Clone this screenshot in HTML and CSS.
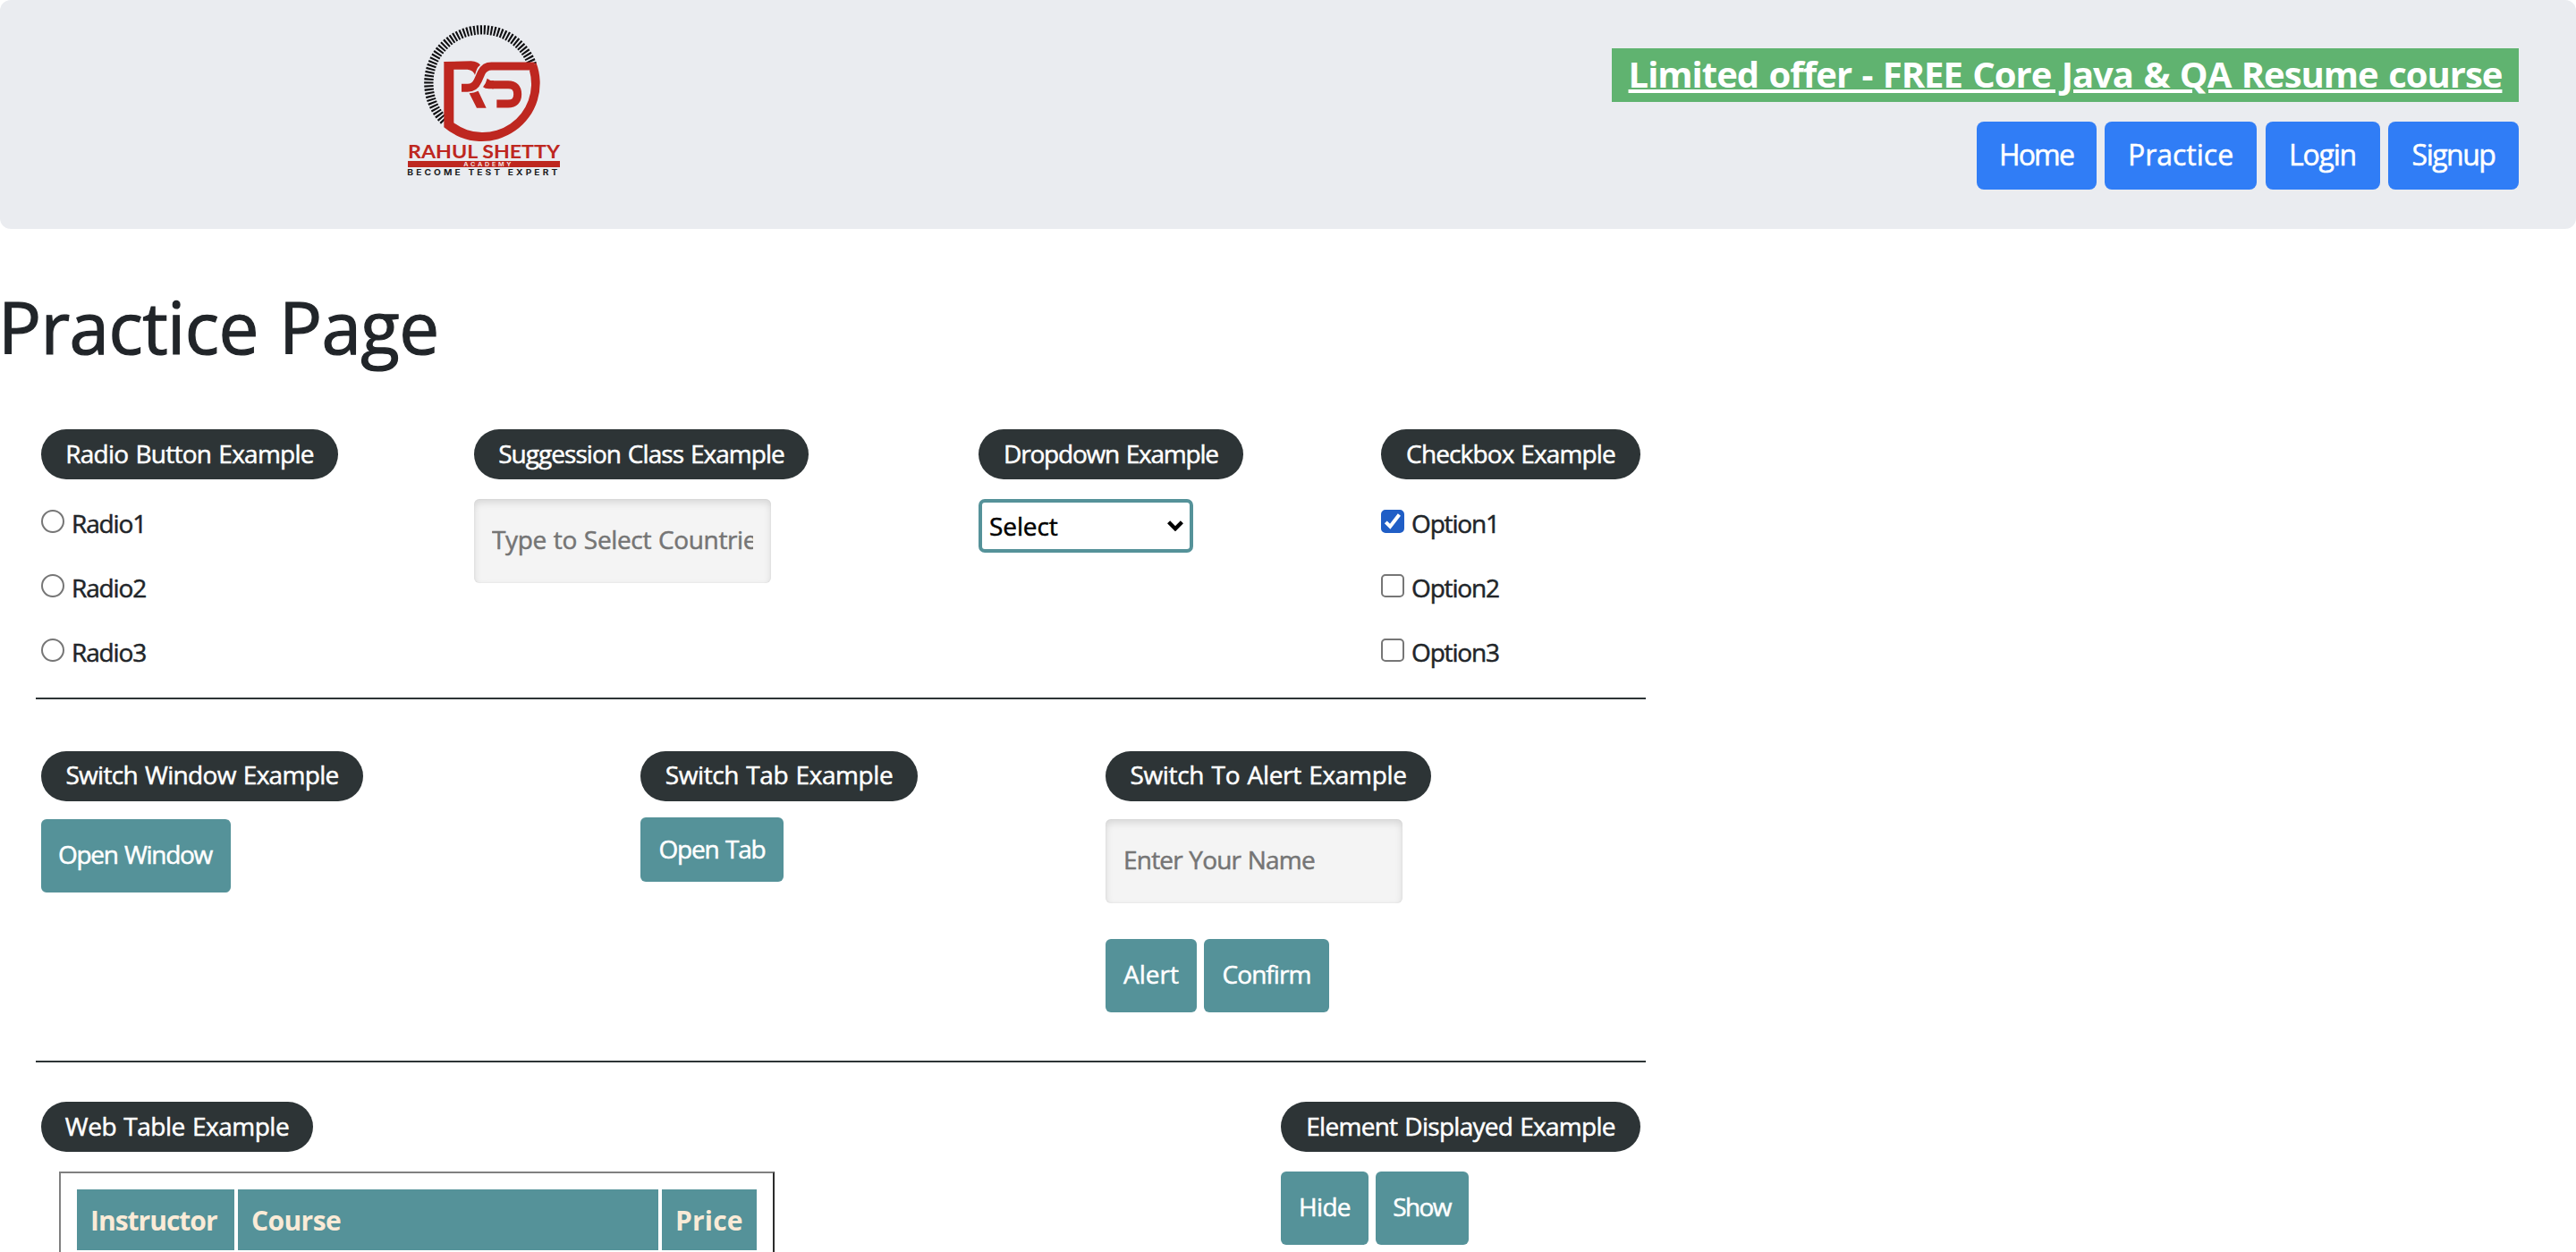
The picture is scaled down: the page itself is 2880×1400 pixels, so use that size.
FILE: index.html
```html
<!DOCTYPE html>
<html lang="en">
<head>
<meta charset="utf-8">
<title>Practice Page</title>
<link rel="stylesheet" href="styles.css">
</head>
<body>
<header class="header">
  <svg class="logo" viewBox="0 0 660 600" role="img" aria-label="Rahul Shetty Academy">
    <path class="logo-ticks" d="M200 375A179 179 0 1 1 495 187"/>
    <g class="logo-red">
      <path d="M199 177V397A195 195 0 0 0 508 179L486 207A163 163 0 0 1 232 382V177Z"/>
      <path d="M199 177L290 175Q314 177 321 188Q306 198 304 224Q298 205 278 203H220Z"/>
      <path d="M284 283Q300 282 314 275L341 332H309Z"/>
      <path d="M344 233Q352 241 366 241V268H350Q336 268 330 262Q340 250 344 233Z"/>
    </g>
    <path class="logo-gap" d="M358 192Q336 192 325 213L313 240Q302 265 278 265"/>
    <path class="logo-stroke" d="M503 192H358Q336 192 325 213L313 240Q302 265 278 265H258"/>
    <path class="logo-stroke" d="M360 254H414Q446 254 446 286Q446 318 414 318H376"/>
    <text class="logo-name" x="78" y="502" textLength="510" lengthAdjust="spacingAndGlyphs">RAHUL SHETTY</text>
    <rect class="logo-red" x="78" y="510" width="510" height="21"/>
    <text class="logo-sub" x="265" y="527" textLength="168" lengthAdjust="spacingAndGlyphs">ACADEMY</text>
    <text class="logo-tag" x="76" y="557" textLength="513" lengthAdjust="spacingAndGlyphs">BECOME TEST EXPERT</text>
  </svg>
  <div class="header-side">
    <a class="offer">Limited offer - FREE Core Java &amp; QA Resume course</a>
    <nav class="nav">
      <button class="nav-button home">Home</button>
      <button class="nav-button practice">Practice</button>
      <button class="nav-button login">Login</button>
      <button class="nav-button signup">Signup</button>
    </nav>
  </div>
</header>

<h1 class="title">Practice Page</h1>

<main class="content">
  <section class="row row-inputs">
    <div class="cell">
      <h2 class="pill radio-title">Radio Button Example</h2>
      <div class="choices">
        <label class="choice"><input class="radio" type="radio" name="radio"><span>Radio1</span></label>
        <label class="choice"><input class="radio" type="radio" name="radio"><span>Radio2</span></label>
        <label class="choice"><input class="radio" type="radio" name="radio"><span>Radio3</span></label>
      </div>
    </div>
    <div class="cell">
      <h2 class="pill suggest-title">Suggession Class Example</h2>
      <input class="field country" type="text" placeholder="Type to Select Countries">
    </div>
    <div class="cell">
      <h2 class="pill dropdown-title">Dropdown Example</h2>
      <div class="select-wrap">
        <select class="select"><option>Select</option><option>Option1</option><option>Option2</option><option>Option3</option></select>
        <svg class="chevron" viewBox="0 0 18 12"><path d="M1.6 1.8L9 9.2L16.4 1.8"/></svg>
      </div>
    </div>
    <div class="cell">
      <h2 class="pill checkbox-title">Checkbox Example</h2>
      <div class="choices">
        <label class="choice"><span class="check-wrap"><input class="checkbox" type="checkbox" checked><svg class="tick" viewBox="0 0 26 26"><path d="M5.3 13.8L10.2 18.7L20.4 5.5"/></svg></span><span>Option1</span></label>
        <label class="choice"><span class="check-wrap"><input class="checkbox" type="checkbox"></span><span>Option2</span></label>
        <label class="choice"><span class="check-wrap"><input class="checkbox" type="checkbox"></span><span>Option3</span></label>
      </div>
    </div>
  </section>

  <section class="row row-switch">
    <div class="cell">
      <h2 class="pill window-title">Switch Window Example</h2>
      <button class="button open-window">Open Window</button>
    </div>
    <div class="cell">
      <h2 class="pill tab-title">Switch Tab Example</h2>
      <a class="button open-tab">Open Tab</a>
    </div>
    <div class="cell">
      <h2 class="pill alert-title">Switch To Alert Example</h2>
      <input class="field" type="text" placeholder="Enter Your Name">
      <div class="actions">
        <button class="button alert">Alert</button>
        <button class="button confirm">Confirm</button>
      </div>
    </div>
  </section>

  <section class="row row-table">
    <div class="cell">
      <h2 class="pill table-title">Web Table Example</h2>
      <table class="courses">
        <thead><tr><th class="col-instructor">Instructor</th><th class="col-course">Course</th><th class="col-price">Price</th></tr></thead>
      </table>
    </div>
    <div class="cell">
      <h2 class="pill element-title">Element Displayed Example</h2>
      <div class="actions toggle">
        <button class="button hide">Hide</button>
        <button class="button show">Show</button>
      </div>
    </div>
  </section>
</main>
</body>
</html>
```
FILE: styles.css
```css
* { box-sizing: border-box; }

html, body { height: 1400px; overflow: hidden; }

body {
  margin: 0;
  background: #fff;
  color: #212529;
  font-family: "Open Sans", "Noto Sans", sans-serif;
  font-size: 28px;
  -webkit-text-stroke: 0.5px;
}

button, input, select { font: inherit; margin: 0; }

/* Header */
.header {
  display: flex;
  justify-content: space-between;
  align-items: flex-start;
  height: 256px;
  padding: 10px 64px 0 430px;
  border-radius: 12px;
  background: #eaecf0;
}
.logo { width: 220px; height: 200px; -webkit-text-stroke: 0; }
.logo-ticks { fill: none; stroke: #111113; stroke-width: 31; stroke-dasharray: 6.3 5.2; }
.logo-red { fill: #be2720; }
.logo-gap { fill: none; stroke: #eaecf0; stroke-width: 33; }
.logo-stroke { fill: none; stroke: #be2720; stroke-width: 27; }
.logo-name { fill: #be2720; font: 700 63px Lato, sans-serif; }
.logo-sub { fill: #f3dedd; font: 700 18px Inter, sans-serif; letter-spacing: 7px; }
.logo-tag { fill: #1b1b1d; font: 700 26px Inter, sans-serif; letter-spacing: 8px; }

.header-side {
  display: flex;
  flex-direction: column;
  align-items: flex-end;
  gap: 22px;
  padding-top: 44px;
}
.offer {
  width: 1014px;
  height: 60px;
  padding-bottom: 2px;
  background: #60b370;
  color: #fff;
  font-size: 40px;
  font-weight: 700;
  line-height: 58px;
  letter-spacing: -1px;
  word-spacing: 2px;
  text-align: center;
  text-decoration: underline;
  text-decoration-thickness: 4px;
  -webkit-text-stroke: 0;
  white-space: nowrap;
}
.nav { display: flex; gap: 9.5px; }
.nav-button {
  height: 76px;
  padding: 0 0 4px;
  border: 0;
  border-radius: 8px;
  background: #307df6;
  color: #fff;
  font-size: 32px;
}
.home { width: 134px; letter-spacing: -1.8px; }
.practice { width: 170px; }
.login { width: 128px; letter-spacing: -1.2px; }
.signup { width: 146px; letter-spacing: -1.5px; }

.title {
  margin: 61px 0 67px;
  font-size: 80px;
  font-weight: 400;
  line-height: 96px;
  letter-spacing: -0.6px;
  word-spacing: 3px;
  text-indent: -2px;
  -webkit-text-stroke: 1.2px;
}

/* Example rows */
.content { width: 1800px; margin-left: 40px; }
.row { display: grid; padding: 0 6px; }
.row-inputs { grid-template-columns: 484px 564px 450px 1fr; height: 302px; border-bottom: 2px solid #2d3436; }
.row-switch { grid-template-columns: 670px 520px 1fr; height: 406px; padding-top: 58px; border-bottom: 2px solid #2d3436; }
.row-table { grid-template-columns: 1386px 1fr; padding-top: 44px; }

.pill {
  height: 56px;
  margin: 0;
  border-radius: 28px;
  background: #2d3436;
  color: #fff;
  font-size: 28px;
  font-weight: 400;
  line-height: 55px;
  word-spacing: 1.5px;
  text-align: center;
  white-space: nowrap;
}
.row-switch .pill { line-height: 52px; }
.radio-title { width: 332px; letter-spacing: -0.73px; }
.suggest-title { width: 374px; letter-spacing: -0.95px; }
.dropdown-title { width: 296px; letter-spacing: -1.2px; }
.checkbox-title { width: 290px; letter-spacing: -0.87px; }
.window-title { width: 360px; letter-spacing: -0.69px; }
.tab-title { width: 310px; letter-spacing: -0.42px; }
.alert-title { width: 364px; letter-spacing: -0.33px; }
.table-title { width: 304px; letter-spacing: -0.5px; }
.element-title { width: 402px; letter-spacing: -0.73px; }

/* Radio buttons and checkboxes */
.choices { padding-top: 11px; }
.choice {
  display: flex;
  align-items: center;
  gap: 8px;
  height: 72px;
  letter-spacing: -1.15px;
}
.choice > span:last-child { padding-top: 4px; line-height: 40px; }
.radio, .checkbox {
  appearance: none;
  width: 26px;
  height: 26px;
  border: 2px solid #767676;
  background: #fff;
}
.radio { border-radius: 50%; }
.checkbox { border-radius: 5px; }
.checkbox:checked { border-color: #205ec6; background: #205ec6; }
.check-wrap { display: grid; width: 26px; }
.check-wrap > * { grid-area: 1 / 1; }
.tick { width: 26px; height: 26px; fill: none; stroke: #fff; stroke-width: 4; }

/* Text fields */
.field {
  display: block;
  width: 332px;
  height: 94px;
  margin-top: 20px;
  padding: 0 20px 4px;
  border: 0;
  border-radius: 6px;
  background: #f4f4f4;
  box-shadow: inset 0 4px 8px rgba(0, 0, 0, 0.12), inset 0 0 2px rgba(0, 0, 0, 0.08);
  letter-spacing: -0.8px;
  word-spacing: 1px;
}
.country { margin-top: 22px; letter-spacing: -0.35px; }
.field::placeholder { color: #757575; opacity: 1; }

.select-wrap { display: grid; align-items: center; width: 240px; margin-top: 22px; }
.select-wrap > * { grid-area: 1 / 1; }
.select {
  appearance: none;
  width: 240px;
  height: 60px;
  padding: 0 8px;
  border: 4px solid #559299;
  border-radius: 7px;
  background: #fff;
  color: #000;
  letter-spacing: -0.1px;
}
.chevron {
  width: 18px;
  height: 12px;
  justify-self: end;
  margin-right: 11px;
  fill: none;
  stroke: #000;
  stroke-width: 4.4;
  pointer-events: none;
}

/* Action buttons */
.button {
  display: block;
  height: 82px;
  margin: 0;
  padding: 0 0 4px;
  border: 0;
  border-radius: 6px;
  background: #559299;
  color: #fff;
  line-height: 78px;
  text-align: center;
  white-space: nowrap;
}
.open-window { width: 212px; margin-top: 20px; padding-right: 2px; letter-spacing: -1.3px; word-spacing: 1.5px; }
.open-tab { width: 160px; height: 72px; margin-top: 18px; line-height: 70px; letter-spacing: -1.2px; word-spacing: 1.5px; }
.actions { display: flex; gap: 8px; margin-top: 40px; }
.toggle { margin-top: 22px; }
.alert { width: 102px; }
.confirm { width: 140px; letter-spacing: -0.95px; }
.hide { width: 98px; letter-spacing: -0.7px; }
.show { width: 104px; padding-right: 1px; letter-spacing: -1.6px; }

/* Course table */
.courses {
  width: 800px;
  margin: 22px 0 0 20px;
  padding: 14px;
  table-layout: fixed;
  border: 2px solid;
  border-color: #808080 #2c2c2c #2c2c2c #808080;
  border-collapse: separate;
  border-spacing: 4px;
}
.courses th {
  height: 68px;
  padding: 0 0 0 15px;
  background: #559299;
  color: #faebd7;
  font-size: 30px;
  font-weight: 700;
  text-align: left;
  -webkit-text-stroke: 0;
}
.col-instructor { width: 176px; letter-spacing: -1px; }
.col-course { width: 470px; letter-spacing: -0.6px; }
.col-price { width: 106px; letter-spacing: 0.2px; }
```
